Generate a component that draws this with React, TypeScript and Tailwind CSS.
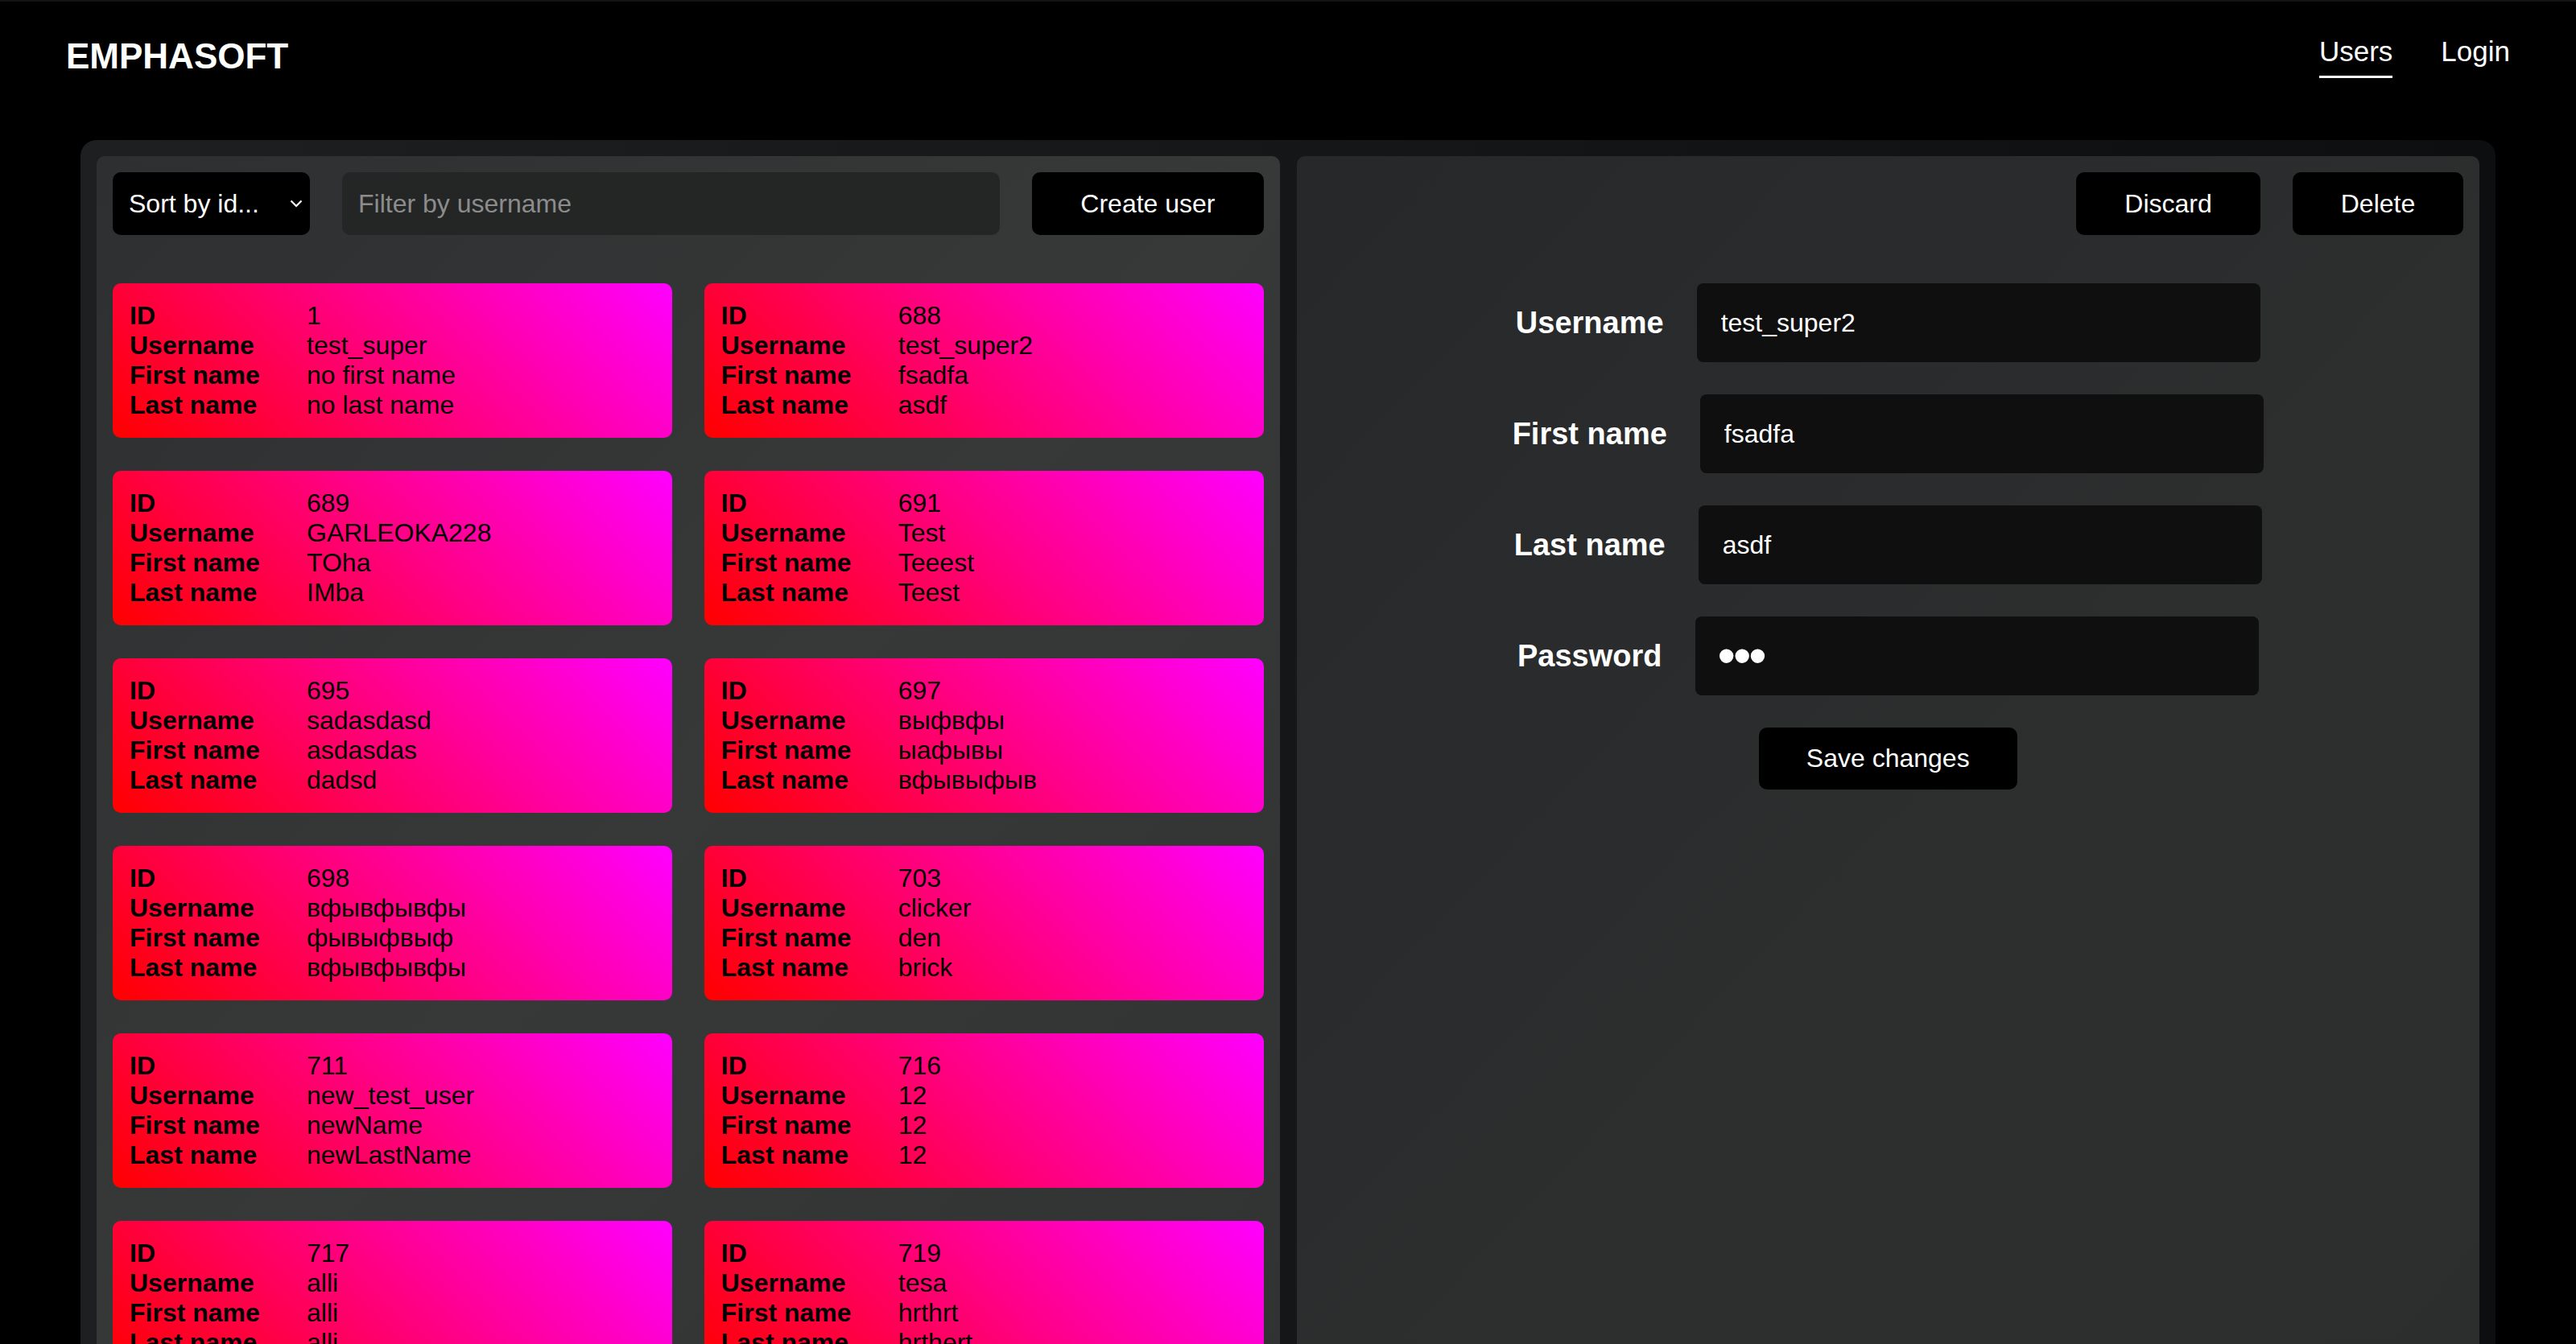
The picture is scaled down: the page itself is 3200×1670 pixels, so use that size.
import React from 'react';

interface User {
  id: number;
  username: string;
  firstName: string;
  lastName: string;
}

const users: User[] = [
  { id: 1, username: 'test_super', firstName: 'no first name', lastName: 'no last name' },
  { id: 688, username: 'test_super2', firstName: 'fsadfa', lastName: 'asdf' },
  { id: 689, username: 'GARLEOKA228', firstName: 'TOha', lastName: 'IMba' },
  { id: 691, username: 'Test', firstName: 'Teeest', lastName: 'Teest' },
  { id: 695, username: 'sadasdasd', firstName: 'asdasdas', lastName: 'dadsd' },
  { id: 697, username: 'выфвфы', firstName: 'ыафывы', lastName: 'вфывыфыв' },
  { id: 698, username: 'вфывфывфы', firstName: 'фывыфвыф', lastName: 'вфывфывфы' },
  { id: 703, username: 'clicker', firstName: 'den', lastName: 'brick' },
  { id: 711, username: 'new_test_user', firstName: 'newName', lastName: 'newLastName' },
  { id: 716, username: '12', firstName: '12', lastName: '12' },
  { id: 717, username: 'alli', firstName: 'alli', lastName: 'alli' },
  { id: 719, username: 'tesa', firstName: 'hrthrt', lastName: 'hrthert' },
];

function UserCard({ user }: { user: User }) {
  const rows: [string, string | number][] = [
    ['ID', user.id],
    ['Username', user.username],
    ['First name', user.firstName],
    ['Last name', user.lastName],
  ];
  return (
    <div className="rounded-[10px] px-[21px] py-[22px] text-black bg-[linear-gradient(45deg,#ff0000,#ff00ff)]">
      {rows.map(([label, value]) => (
        <div key={label} className="flex text-[32px] leading-[normal]">
          <span className="w-[220px] font-bold">{label}</span>
          <span>{value}</span>
        </div>
      ))}
    </div>
  );
}

function FormRow({ label, value, type = 'text' }: { label: string; value: string; type?: string }) {
  const isPassword = type === 'password';
  return (
    <div className="flex items-center gap-[41px]">
      <label className="text-[38px] font-bold text-white">{label}</label>
      <input
        type={type}
        defaultValue={value}
        readOnly
        className={
          isPassword
            ? 'w-[700px] h-[98px] rounded-[8px] bg-[#0f0f0f] pl-[28px] pr-[30px] text-[64px] tracking-[-3px] text-white outline-none'
            : 'w-[700px] h-[98px] rounded-[8px] bg-[#0f0f0f] px-[30px] text-[32px] text-white outline-none'
        }
      />
    </div>
  );
}

export default function App() {
  return (
    <div className="min-h-screen bg-black text-white leading-[normal] font-['Liberation_Sans',Arial,sans-serif]">
      <div className="h-[2px] bg-[#141414]" />
      <header className="flex h-[136px] items-center justify-between px-[82px]">
        <div className="text-[44px] font-bold">EMPHASOFT</div>
        <nav className="flex items-center gap-[60px] text-[35px]">
          <a className="pb-[10px] border-b-[3px] border-white">Users</a>
          <a className="pb-[13px]">Login</a>
        </nav>
      </header>

      <main className="mx-[100px] mt-[36px] rounded-[20px] p-[20px] bg-[linear-gradient(to_right,#1e1f20,#0d0e0f)]">
        <div className="grid grid-cols-2 gap-[21px]">
          {/* user list */}
          <section className="rounded-[10px] p-[20px] pb-[40px] bg-[linear-gradient(to_bottom_right,#2e2f30,#373838_50%,#313232)]">
            <div className="flex h-[78px] gap-[40px]">
              <div className="flex w-[245px] items-center justify-between rounded-[10px] bg-black pl-[20px] pr-[9px] text-[32px]">
                <span>Sort by id...</span>
                <svg width="16" height="10" viewBox="0 0 16 10" fill="none">
                  <polyline points="1.5,1.5 8,8 14.5,1.5" stroke="white" strokeWidth="2.2" />
                </svg>
              </div>
              <input
                placeholder="Filter by username"
                className="flex-1 rounded-[10px] bg-[#242525] px-[20px] text-[32px] text-white placeholder:text-[#8c8c8c] outline-none"
              />
              <button className="rounded-[10px] bg-black px-[60px] text-[32px] text-white">Create user</button>
            </div>

            <div className="mt-[60px] grid grid-cols-2 gap-x-[40px] gap-y-[41px]">
              {users.map((u) => (
                <UserCard key={u.id} user={u} />
              ))}
            </div>
          </section>

          {/* edit form */}
          <section className="rounded-[10px] p-[20px] bg-[linear-gradient(to_bottom_right,#27282a,#2d2e2e_60%,#2c2d2d)]">
            <div className="flex h-[78px] justify-end gap-[40px]">
              <button className="w-[229px] rounded-[10px] bg-black text-[32px] text-white">Discard</button>
              <button className="w-[212px] rounded-[10px] bg-black text-[32px] text-white">Delete</button>
            </div>

            <div className="mt-[60px] flex flex-col items-center gap-[40px]">
              <FormRow label="Username" value="test_super2" />
              <FormRow label="First name" value="fsadfa" />
              <FormRow label="Last name" value="asdf" />
              <FormRow label="Password" value="123" type="password" />
              <button className="h-[77px] rounded-[10px] bg-black px-[59px] text-[32px] text-white">Save changes</button>
            </div>
          </section>
        </div>
      </main>
    </div>
  );
}
